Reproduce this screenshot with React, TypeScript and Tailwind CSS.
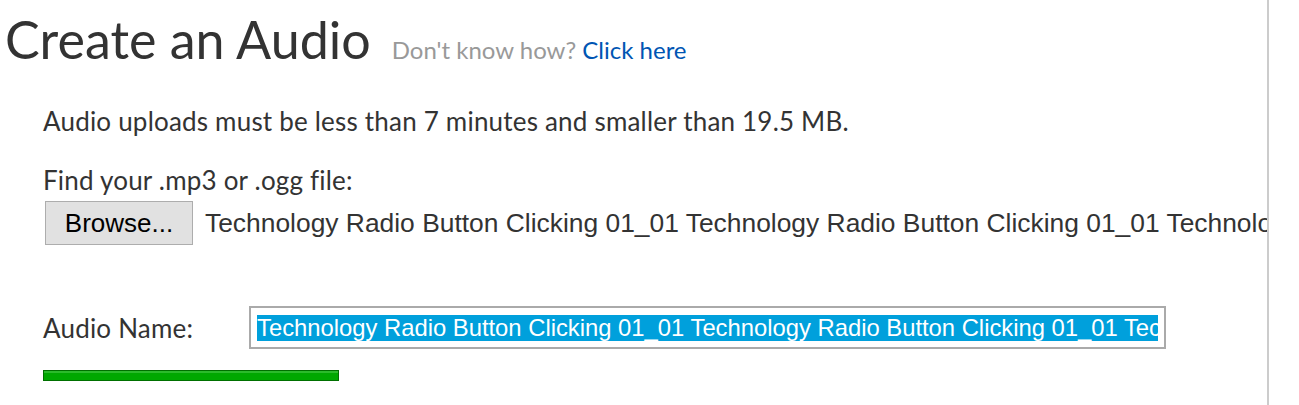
const fileName =
  'Technology Radio Button Clicking 01_01 Technology Radio Button Clicking 01_01 Technology Radio Button Clicking 01_01';

export default function App() {
  return (
    <div className="flex h-[405px] w-[1299px] overflow-hidden bg-white font-['Lato',sans-serif] text-[#333]">
      <div className="w-[1267px] shrink-0 overflow-hidden">
        <div className="flex items-baseline whitespace-nowrap pl-[5px] pt-[9px]">
          <h1 className="text-[52px] leading-[60px] font-normal">Create an Audio</h1>
          <span className="ml-[21px] text-[24px] text-[#999]">
            Don't know how? <a className="text-[#0055b3]">Click here</a>
          </span>
        </div>

        <div className="pl-[43px] pt-[36px] text-[26px] leading-[32px] tracking-[0.2px]">
          <p>Audio uploads must be less than 7 minutes and smaller than 19.5 MB.</p>
          <p className="mt-[27px]">Find your .mp3 or .ogg file:</p>

          <div className="mt-[5px] flex items-center whitespace-nowrap pl-[2px] tracking-normal">
            <button className="h-[44px] w-[148px] shrink-0 border border-[#adadad] bg-[#e1e1e1] font-['Liberation_Sans',sans-serif] text-[26px] text-black">
              Browse...
            </button>
            <span className="ml-[12px] font-['Liberation_Sans',sans-serif] text-[26.4px] text-[#333]">{fileName}</span>
          </div>

          <div className="mt-[61px] flex items-center">
            <label className="w-[206px] shrink-0">Audio Name:</label>
            <div className="flex h-[43px] w-[917px] shrink-0 items-center overflow-hidden border-2 border-[#aaa] px-[6px]">
              <span className="overflow-hidden whitespace-nowrap bg-[#00a0dc] font-['Liberation_Sans',sans-serif] text-[23.8px] leading-[26px] tracking-normal text-white">
                {fileName}
              </span>
            </div>
          </div>

          <div className="mt-[21px] h-[11px] w-[296px] border border-[#007000] bg-[#00a800] shadow-[inset_0_2px_0_#2bbb2b]" />
        </div>
      </div>
      <div className="w-[2px] shrink-0 bg-[#ccc]" />
    </div>
  );
}
